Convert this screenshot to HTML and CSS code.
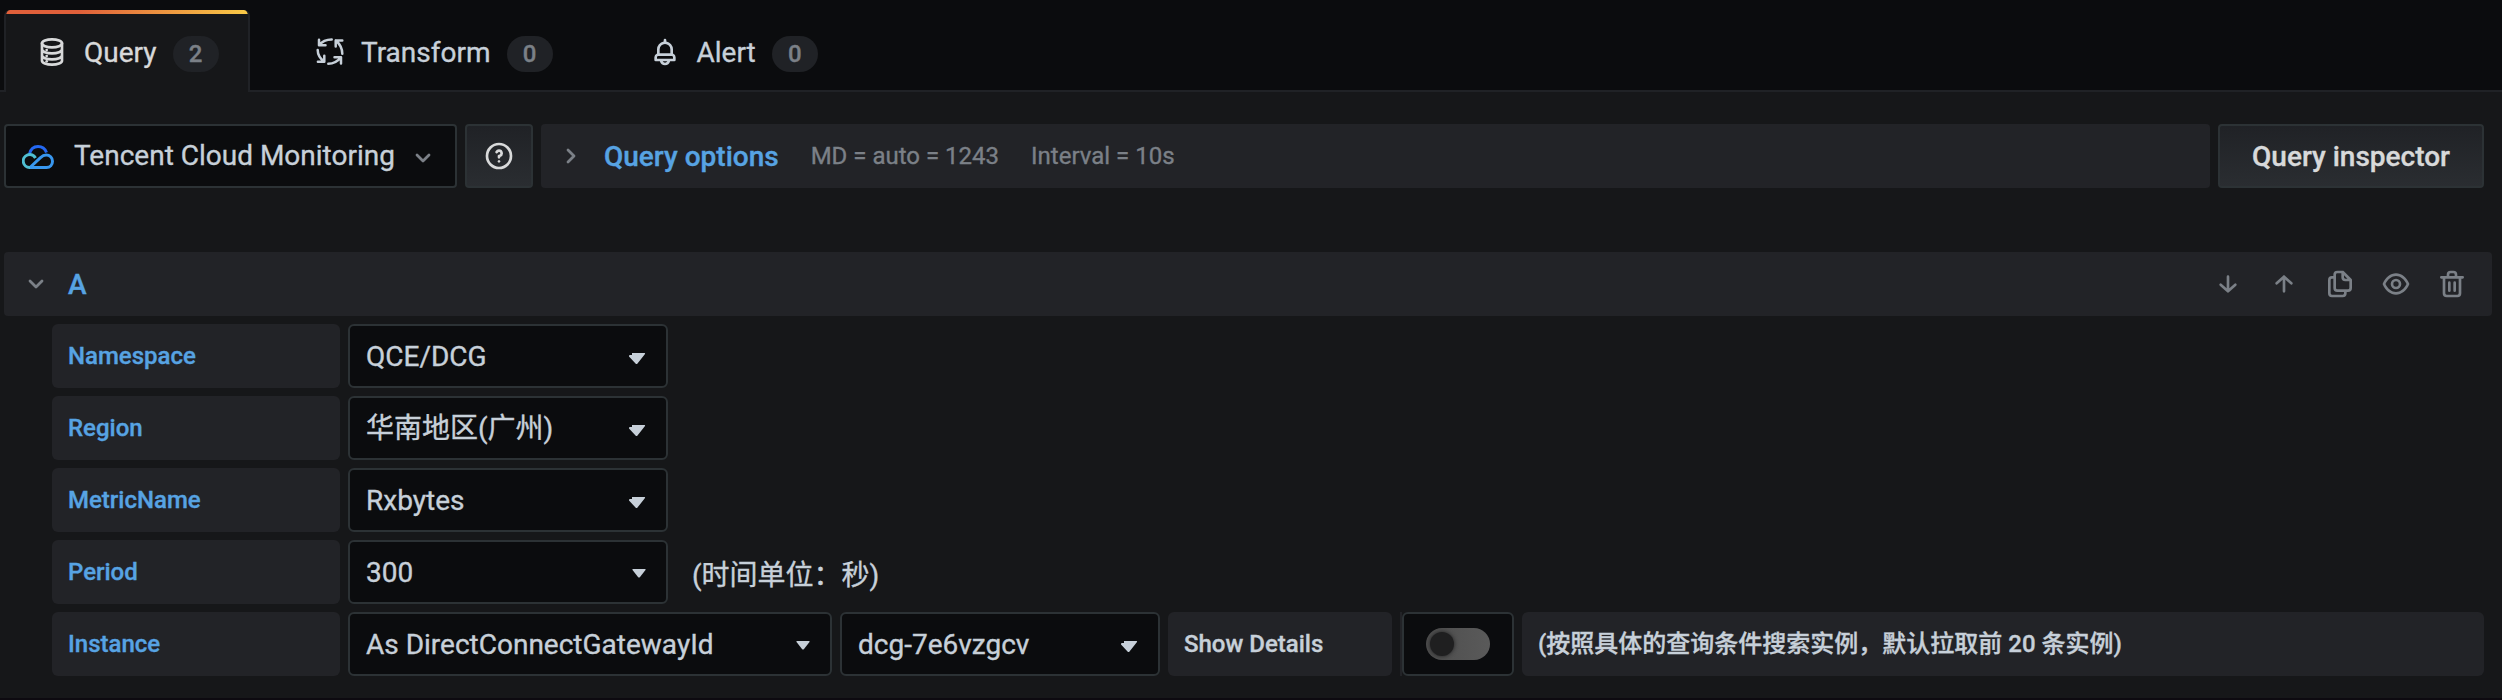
FILE: index.html
```html
<!DOCTYPE html>
<html lang="zh-CN">
<head>
<meta charset="utf-8">
<title>Query editor</title>
<link rel="stylesheet" href="styles.css">
</head>
<body>
<nav class="tabs">
  <div class="tab active">
    <svg class="icon" viewBox="0 0 24 24"><g class="line"><ellipse cx="12" cy="5.500" rx="7.500" ry="3"/><path d="M4.500 5.500V18.500C4.500 20.200 7.800 21.500 12 21.500s7.500-1.300 7.500-3V5.500M4.500 10c0 1.700 3.300 3 7.500 3s7.500-1.300 7.500-3M4.500 14.500c0 1.700 3.300 3 7.500 3s7.500-1.300 7.500-3"/></g><circle cx="8" cy="10.500" r="1"/><circle cx="8" cy="15" r="1"/><circle cx="8" cy="19" r="1"/></svg>
    <span class="tab-name">Query</span><span class="badge">2</span>
  </div>
  <div class="tab transform">
    <svg class="process" viewBox="0 0 28 28"><g class="line"><path d="M15.700 1.500C10 1.500 6 3.500 3 7.200M3 1.700v5.500h6.500M1.700 12c0 4.500 2.300 8.500 6.600 11.800M1.900 23.800h6.400v-6M12.300 25.800c5 0 9.500-2.600 12.700-6.600M18.500 19.200H25v6.300M26.300 15.800c0-5-2-9.500-6.600-13.300M26.300 2.500h-6.600v6"/></g></svg>
    <span class="tab-name">Transform</span><span class="badge">0</span>
  </div>
  <div class="tab alert">
    <svg class="icon" viewBox="0 0 24 24"><path d="M18 13.180V10a6 6 0 0 0-5-5.910V3a1 1 0 0 0-2 0v1.090A6 6 0 0 0 6 10v3.180A3 3 0 0 0 4 16v2a1 1 0 0 0 1 1h3.140a4 4 0 0 0 7.720 0H19a1 1 0 0 0 1-1v-2a3 3 0 0 0-2-2.820zM8 10a4 4 0 0 1 8 0v3H8zm4 10a2 2 0 0 1-1.720-1h3.440A2 2 0 0 1 12 20zm6-3H6v-1a1 1 0 0 1 1-1h10a1 1 0 0 1 1 1z"/></svg>
    <span class="tab-name">Alert</span><span class="badge">0</span>
  </div>
</nav>
<main>
  <div class="toolbar">
    <div class="picker">
      <svg class="cloud" viewBox="0 0 32 24"><path class="c-top" d="M7.500 9C8.500 4.500 11.500 1.500 16 1.500c4 0 7 2 8.500 6"/><path class="c-left" d="M9 22.500H8A6.500 6.500 0 1 1 13.500 13"/><path class="c-right" d="M8 22.500h16.500c3.500 0 6-2.800 6-6.300s-2.800-6.200-6.300-6.200c-2.500 0-4 1-6 2.800L8.500 22"/></svg>
      <span class="picker-name">Tencent Cloud Monitoring</span>
      <svg class="chev" viewBox="0 0 16 16"><path d="M2 5l6 6 6-6"/></svg>
    </div>
    <div class="help"><svg class="icon" viewBox="0 0 24 24"><path d="M11.290 15.290a1 1 0 0 0 0 1.420 1 1 0 0 0 1.420 0 1 1 0 0 0 0-1.420 1 1 0 0 0-1.420 0zM12 2a10 10 0 1 0 10 10A10 10 0 0 0 12 2zm0 18a8 8 0 1 1 8-8 8 8 0 0 1-8 8zm0-13a3 3 0 0 0-2.600 1.500 1 1 0 1 0 1.730 1A1 1 0 0 1 12 9a1 1 0 0 1 0 2 1 1 0 0 0-1 1v1a1 1 0 0 0 2 0v-.180A3 3 0 0 0 12 7z"/></svg></div>
    <div class="options">
      <svg class="chev" viewBox="0 0 16 16"><path d="M5 2l6 6-6 6"/></svg>
      <span class="options-title">Query options</span><span class="meta">MD = auto = 1243</span><span class="meta">Interval = 10s</span>
    </div>
    <div class="inspector">Query inspector</div>
  </div>
  <header class="query-head">
    <svg class="chev" viewBox="0 0 16 16"><path d="M2 5l6 6 6-6"/></svg>
    <span class="ref-id">A</span>
    <div class="actions">
      <svg viewBox="0 0 24 24"><path class="line" d="M12 6.500v11M6.500 12.500l5.500 5 5.500-5"/></svg>
      <svg viewBox="0 0 24 24"><path class="line" d="M12 17.500v-11M6.500 11.500l5.500-5 5.500 5"/></svg>
      <svg viewBox="0 0 24 24"><path d="M21 8.940a1.310 1.310 0 0 0-.060-.270v-.090a1.070 1.070 0 0 0-.190-.280l-6-6a1.070 1.070 0 0 0-.280-.190h-.090L14.060 2H10a3 3 0 0 0-3 3v1H6a3 3 0 0 0-3 3v10a3 3 0 0 0 3 3h8a3 3 0 0 0 3-3v-1h1a3 3 0 0 0 3-3V9zM15 5.410L17.590 8H16a1 1 0 0 1-1-1zM15 19a1 1 0 0 1-1 1H6a1 1 0 0 1-1-1V9a1 1 0 0 1 1-1h1v7a3 3 0 0 0 3 3h5zm4-4a1 1 0 0 1-1 1h-8a1 1 0 0 1-1-1V5a1 1 0 0 1 1-1h3v3a3 3 0 0 0 3 3h3z"/></svg>
      <svg viewBox="0 0 24 24"><path d="M21.920 11.600C19.900 6.910 16.100 4 12 4s-7.900 2.910-9.920 7.600a1 1 0 0 0 0 .800C4.100 17.090 7.900 20 12 20s7.900-2.910 9.920-7.600a1 1 0 0 0 0-.800zM12 18c-3.170 0-6.170-2.290-7.900-6C5.830 8.290 8.830 6 12 6s6.170 2.290 7.900 6c-1.730 3.710-4.730 6-7.900 6zm0-10a4 4 0 1 0 4 4 4 4 0 0 0-4-4zm0 6a2 2 0 1 1 2-2 2 2 0 0 1-2 2z"/></svg>
      <svg viewBox="0 0 24 24"><path d="M10 18a1 1 0 0 0 1-1v-6a1 1 0 0 0-2 0v6a1 1 0 0 0 1 1zM20 6h-4V5a3 3 0 0 0-3-3h-2a3 3 0 0 0-3 3v1H4a1 1 0 0 0 0 2h1v11a3 3 0 0 0 3 3h8a3 3 0 0 0 3-3V8h1a1 1 0 0 0 0-2zM10 5a1 1 0 0 1 1-1h2a1 1 0 0 1 1 1v1h-4zm7 14a1 1 0 0 1-1 1H8a1 1 0 0 1-1-1V8h10zm-3-1a1 1 0 0 0 1-1v-6a1 1 0 0 0-2 0v6a1 1 0 0 0 1 1z"/></svg>
    </div>
  </header>
  <section class="form">
    <div class="row"><div class="label">Namespace</div><div class="select">QCE/DCG<svg class="caret wide" viewBox="0 0 18 12"><path d="M4 0h12.500q1 0 .5 1L9.500 10.500q-1 1-2 0L1 3.500Q.5 2 2 2h2z"/></svg></div></div>
    <div class="row"><div class="label">Region</div><div class="select">华南地区(广州)<svg class="caret wide" viewBox="0 0 18 12"><path d="M4 0h12.500q1 0 .5 1L9.500 10.500q-1 1-2 0L1 3.500Q.5 2 2 2h2z"/></svg></div></div>
    <div class="row"><div class="label">MetricName</div><div class="select">Rxbytes<svg class="caret wide" viewBox="0 0 18 12"><path d="M4 0h12.500q1 0 .5 1L9.500 10.500q-1 1-2 0L1 3.500Q.5 2 2 2h2z"/></svg></div></div>
    <div class="row"><div class="label">Period</div><div class="select">300<svg class="caret" viewBox="0 0 14 9"><path d="M1 0h12q1 0 .5 1L8 8q-1 1-2 0L.5 1Q0 0 1 0z"/></svg></div><div class="unit">(时间单位：秒)</div></div>
    <div class="row"><div class="label">Instance</div><div class="select instance">As DirectConnectGatewayId<svg class="caret" viewBox="0 0 14 9"><path d="M1 0h12q1 0 .5 1L8 8q-1 1-2 0L.5 1Q0 0 1 0z"/></svg></div><div class="select">dcg-7e6vzgcv<svg class="caret wide" viewBox="0 0 18 12"><path d="M4 0h12.500q1 0 .5 1L9.500 10.500q-1 1-2 0L1 3.500Q.5 2 2 2h2z"/></svg></div><div class="label details">Show Details</div><div class="switch-wrap"><div class="switch"><div class="track"><div class="knob"></div></div></div></div><div class="label note">(按照具体的查询条件搜索实例，默认拉取前 20 条实例)</div></div>
  </section>
</main>
</body>
</html>
```
FILE: styles.css
```css
* { box-sizing: border-box; }
body {
  margin: 0;
  height: 700px;
  overflow: hidden;
  background: #161719;
  border-bottom: 2px solid #0d0a10;
  color: #c7d0d9;
  font: 28px/42px Roboto, "Noto Sans CJK SC", sans-serif;
  -webkit-text-stroke: .35px;
}
svg { display: block; flex: none; fill: currentColor; }
.line { fill: none; stroke: currentColor; stroke-width: 2; stroke-linecap: round; stroke-linejoin: round; }
.icon { width: 32px; height: 32px; }
.chev { width: 16px; height: 16px; color: #7b8087; }
.chev path { fill: none; stroke: currentColor; stroke-width: 2.8; stroke-linecap: round; stroke-linejoin: round; }

.tabs {
  display: flex;
  height: 92px;
  padding: 10px 0 0 4px;
  background: #0b0c0e;
  box-shadow: inset 0 -2px #202226;
}
.tab { display: flex; flex: none; align-items: center; height: 82px; padding: 2px 32px 0; }
.tab-name { margin: 2px 0 0 16px; }
.active {
  position: relative;
  width: 246px;
  padding-left: 30px;
  border: solid #202226;
  border-width: 0 2px;
  border-radius: 6px 6px 0 0;
  background: #161719;
  color: #d8d9da;
  overflow: hidden;
}
.active::before {
  content: "";
  position: absolute;
  inset: 0 0 auto;
  height: 4px;
  background: linear-gradient(to right, #e0603a 30%, #f9c846 99%);
}
.transform { padding-left: 66px; }
.transform .tab-name { margin-left: 17px; }
.alert { padding-left: 64px; }
.process { width: 28px; height: 28px; }
.process .line { stroke-width: 2.5; }
.badge {
  flex: none;
  width: 46px;
  height: 36px;
  margin: 3px 0 0 16px;
  border-radius: 18px;
  background: #202226;
  color: #7b8087;
  font-size: 24px;
  font-weight: 500;
  line-height: 36px;
  text-align: center;
}

.toolbar { display: flex; gap: 8px; height: 64px; margin: 32px 18px 0 4px; }
.picker, .select, .switch { border: 2px solid #2c3235; background: #0b0c0e; }
.picker { display: flex; align-items: center; width: 453px; border-radius: 4px; padding-left: 16px; }
.picker-name { margin: 0 20px 0 20px; }
.picker .chev { margin-top: 4px; }
.cloud { width: 32px; height: 24px; margin-top: 2px; }
.cloud path { fill: none; stroke-width: 3; }
.c-top { stroke: #2468f2; }
.c-left { stroke: #50bfd2; }
.c-right { stroke: #3897ef; }
.help, .inspector {
  display: flex;
  align-items: center;
  justify-content: center;
  border: 2px solid #2c3235;
  border-radius: 4px;
  background: linear-gradient(#202226, #2a2d31);
  color: #d8d9da;
}
.help { width: 68px; }
.options { display: flex; flex: 1; align-items: center; padding-left: 22px; border-radius: 4px; background: #222327; }
.options-title { margin: 2px 0 0 25px; color: #57a3e3; font-weight: 500; }
.meta { margin-left: 32px; color: #7b8087; font-size: 24px; }
.inspector { width: 266px; padding-top: 2px; font-weight: 500; }

.query-head {
  display: flex;
  align-items: center;
  height: 64px;
  margin: 64px 10px 8px 4px;
  padding: 0 24px;
  border-radius: 4px;
  background: #222327;
}
.ref-id { margin: 2px 0 0 24px; color: #57a3e3; font-weight: 500; }
.actions { display: flex; gap: 24px; margin-left: auto; color: #7b8087; }
.actions svg { width: 32px; height: 32px; }

.form { display: grid; gap: 8px; margin: 0 18px 0 52px; }
.row { display: flex; gap: 8px; height: 64px; }
.label {
  flex: none;
  width: 288px;
  padding-left: 16px;
  border-radius: 6px;
  background: #222327;
  color: #57a3e3;
  font-size: 24px;
  font-weight: 500;
  line-height: 64px;
}
.select {
  display: flex;
  flex: none;
  align-items: center;
  justify-content: space-between;
  width: 320px;
  padding: 1px 20px 0 16px;
  border-radius: 6px;
}
.instance { width: 484px; }
.caret { width: 14px; height: 9px; margin-top: 2px; }
.wide { width: 18px; height: 12px; margin-top: 4px; }
.unit { padding-left: 16px; line-height: 72px; }
.details { width: 224px; color: #c7d0d9; }
.switch-wrap { width: 114px; border-left: 2px solid #222327; }
.switch { display: flex; align-items: center; justify-content: center; height: 64px; border-radius: 6px; }
.track { width: 64px; height: 32px; padding: 4px; border-radius: 16px; background: linear-gradient(90deg, #4d4d4d, #5a5a5a); overflow: hidden; }
.knob { width: 24px; height: 24px; border-radius: 50%; background: #1f1f20; box-shadow: 0 0 4px #1f1f20; }
.note { flex: 1; color: #c7d0d9; }
```
